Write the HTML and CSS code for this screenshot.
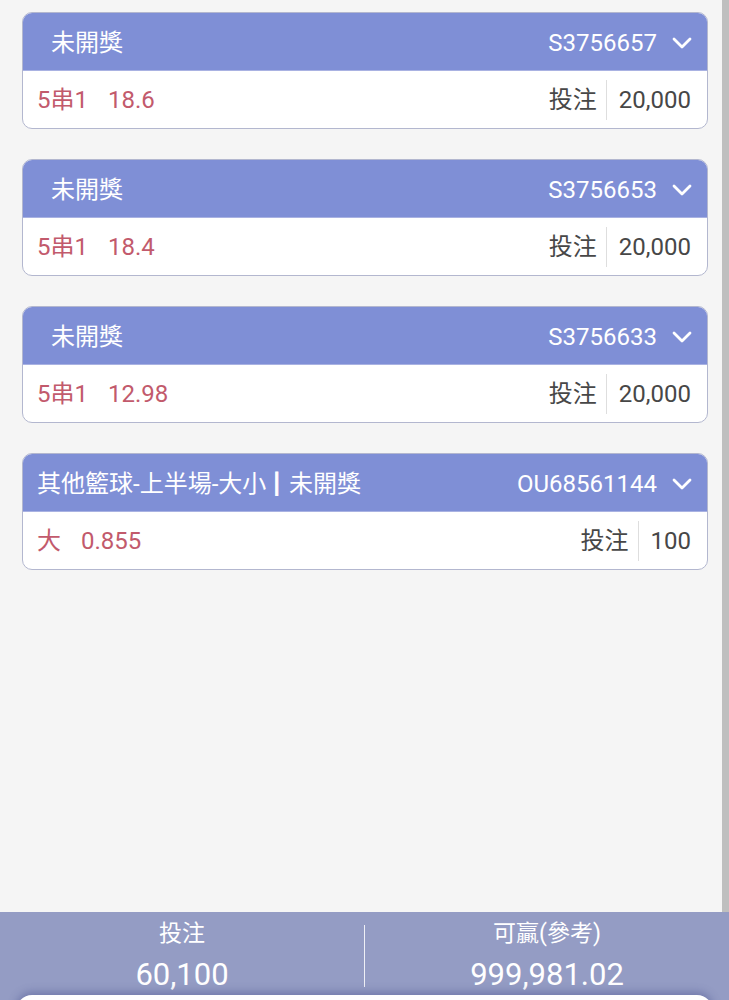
FILE: index.html
```html
<!DOCTYPE html>
<html lang="zh-Hant">
<head>
<meta charset="utf-8">
<title>注單</title>
<link rel="stylesheet" href="styles.css">
</head>
<body>
<div class="page">
  <div class="main">
    <div class="list">
      <div class="card">
        <div class="card-head card-head--plain">
          <span class="head-title">未開獎</span>
          <span class="head-id">S3756657<svg class="chev" viewBox="0 0 20 12"><polyline points="2,2 10,10 18,2"/></svg></span>
        </div>
        <div class="card-body">
          <div class="odds"><span class="pick">5串1</span><span>18.6</span></div>
          <div class="stake"><span class="stake-label">投注</span><span class="sep"></span><span class="stake-val">20,000</span></div>
        </div>
      </div>
      <div class="card">
        <div class="card-head card-head--plain">
          <span class="head-title">未開獎</span>
          <span class="head-id">S3756653<svg class="chev" viewBox="0 0 20 12"><polyline points="2,2 10,10 18,2"/></svg></span>
        </div>
        <div class="card-body">
          <div class="odds"><span class="pick">5串1</span><span>18.4</span></div>
          <div class="stake"><span class="stake-label">投注</span><span class="sep"></span><span class="stake-val">20,000</span></div>
        </div>
      </div>
      <div class="card">
        <div class="card-head card-head--plain">
          <span class="head-title">未開獎</span>
          <span class="head-id">S3756633<svg class="chev" viewBox="0 0 20 12"><polyline points="2,2 10,10 18,2"/></svg></span>
        </div>
        <div class="card-body">
          <div class="odds"><span class="pick">5串1</span><span>12.98</span></div>
          <div class="stake"><span class="stake-label">投注</span><span class="sep"></span><span class="stake-val">20,000</span></div>
        </div>
      </div>
      <div class="card">
        <div class="card-head">
          <span class="head-title"><span class="league">其他籃球-上半場-大小</span><span class="bar">|</span>未開獎</span>
          <span class="head-id">OU68561144<svg class="chev" viewBox="0 0 20 12"><polyline points="2,2 10,10 18,2"/></svg></span>
        </div>
        <div class="card-body">
          <div class="odds"><span class="pick">大</span><span>0.855</span></div>
          <div class="stake"><span class="stake-label">投注</span><span class="sep"></span><span class="stake-val">100</span></div>
        </div>
      </div>
    </div>
    <div class="scrollbar"></div>
  </div>
  <div class="footer">
    <div class="sum">
      <div class="sum-label">投注</div>
      <div class="sum-val">60,100</div>
    </div>
    <div class="divider"></div>
    <div class="sum">
      <div class="sum-label">可贏(參考)</div>
      <div class="sum-val">999,981.02</div>
    </div>
  </div>
  <div class="sheet-wrap"><div class="sheet"></div></div>
</div>
</body>
</html>
```

FILE: styles.css
```css
html, body {
  margin: 0;
  padding: 0;
}
body {
  background: #f5f5f5;
  font-family: Roboto, "Noto Sans CJK TC", "Noto Sans", sans-serif;
  overflow: hidden;
}
.page {
  height: 1000px;
  display: flex;
  flex-direction: column;
  overflow: hidden;
  background: #f5f5f5;
}
.main {
  height: 912px;
  flex: none;
  display: flex;
}
.list {
  flex: 1;
  padding: 12px 14px 0 22px;
  display: flex;
  flex-direction: column;
  gap: 30px;
}
.scrollbar {
  width: 7px;
  background: #bfbfbf;
}
.card {
  border: 1px solid #b3b7cf;
  border-radius: 10px;
  overflow: hidden;
  background: #fff;
}
.card-head {
  height: 58px;
  background: #7f8fd6;
  color: #fff;
  font-size: 24px;
  line-height: 30px;
  display: flex;
  align-items: center;
  justify-content: space-between;
  padding: 2px 15px 0 14px;
  border-bottom: 1px solid #a9b2e2;
  box-sizing: border-box;
}
.card-head--plain {
  padding-left: 28px;
}
.head-title {
  display: flex;
  align-items: center;
  white-space: nowrap;
}
.bar {
  font-weight: 700;
  font-size: 27px;
  margin: 0 9px 0 7px;
  position: relative;
  top: -1px;
  -webkit-text-stroke: 0.8px #fff;
}
.head-id {
  display: flex;
  align-items: center;
}
.chev {
  width: 20px;
  height: 12px;
  margin-left: 15px;
  fill: none;
  stroke: #fff;
  stroke-width: 2.8;
  stroke-linecap: round;
  stroke-linejoin: round;
}
.card-body {
  height: 57px;
  display: flex;
  align-items: center;
  justify-content: space-between;
  padding: 0 16px 0 14px;
  font-size: 24px;
  line-height: 30px;
}
.odds {
  color: #c25a6c;
  display: flex;
  align-items: center;
}
.pick {
  margin-right: 20px;
}
.stake {
  display: flex;
  align-items: center;
  color: #474747;
}
.sep {
  width: 1px;
  height: 40px;
  background: #dedede;
  margin: 0 12px 0 9px;
}
.footer {
  flex: none;
  height: 83px;
  background: #949cc4;
  display: flex;
  align-items: stretch;
  color: #fff;
}
.sum {
  flex: 1;
  text-align: center;
  padding-top: 4px;
}
.sum-label {
  font-size: 23px;
  line-height: 36px;
}
.sum-val {
  font-size: 31px;
  line-height: 40px;
  margin-top: 3px;
}
.divider {
  width: 1px;
  background: rgba(255, 255, 255, 0.85);
  margin: 13px 0 8px;
}
.sheet-wrap {
  flex: 1;
  background: #949cc4;
  padding: 0 16px;
}
.sheet {
  height: 40px;
  background: #fff;
  border-radius: 16px 16px 0 0;
  box-shadow: 0 -3px 8px rgba(70, 80, 140, 0.45);
}
```
